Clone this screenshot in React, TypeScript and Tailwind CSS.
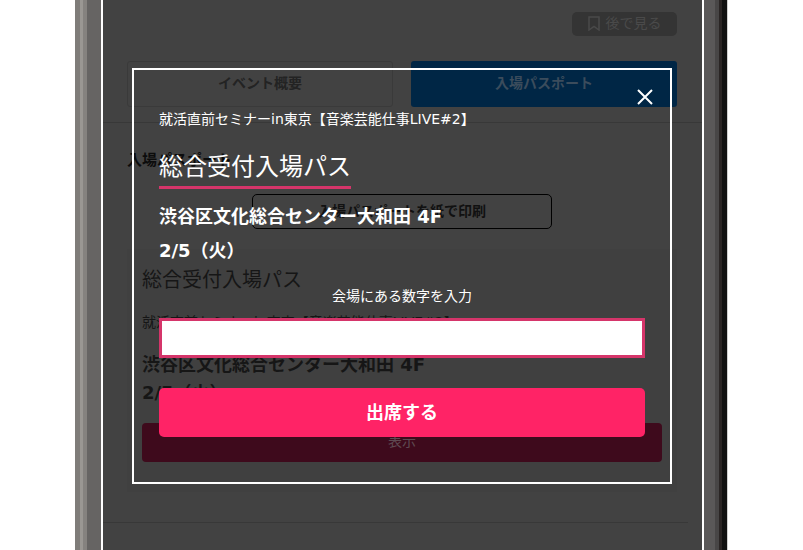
const font = { fontFamily: '"DejaVu Sans", "Noto Sans CJK JP", sans-serif' };

function Underlying() {
  return (
    <div className="flex w-[599px] h-[550px] flex-col bg-[#424242] overflow-hidden">
      <div className="flex justify-end pr-[25px] pt-3">
        <div className="flex h-6 w-[105px] items-center justify-center gap-[6px] rounded-[5px] bg-[#343434] pb-[2px] text-[14px] text-[#4a4a4a]">
          <svg width="12" height="15" viewBox="0 0 12 15" fill="none" stroke="#4a4a4a" strokeWidth="1.5">
            <path d="M1 1h10v13L6 10.5 1 14z" />
          </svg>
          後で見る
        </div>
      </div>
      <div className="mt-[25px] flex gap-[18px] pl-[24px] pr-[25px] border-b border-[#383838] pb-[15px]">
        <div className="flex h-[46px] w-[266px] items-center justify-center rounded-[3px] border border-[#3a3a3a] pb-[2px] text-[14px] font-bold text-[#232323]">イベント概要</div>
        <div className="flex h-[46px] w-[266px] items-center justify-center rounded-[3px] bg-[#002645] pb-[2px] text-[14px] font-bold text-[#3b4c5c]">入場パスポート</div>
      </div>
      <div className="pl-[24px] pr-[25px] pt-[27px]">
        <div className="text-[15px] leading-5 font-bold text-[#0c0c0c]">入場パスポート</div>
        <div className="mt-[24px] mx-auto flex h-[35px] w-[300px] items-center justify-center rounded-[5px] border border-black text-[14px] font-bold text-[#111111]">入場パスポートを紙で印刷</div>
      </div>
      <div className="mt-[20px] ml-[24px] mr-[25px] h-[243px] bg-[#404040] px-[15px] pt-[17px] text-[#161616]">
        <div className="text-[20px] leading-[28px]">総合受付入場パス</div>
        <div className="mt-[18px] text-[14px] leading-5">就活直前セミナーin東京【音楽芸能仕事LIVE#2】</div>
        <div className="mt-[21px] text-[18px] leading-6 font-bold">渋谷区文化総合センター大和田 4F</div>
        <div className="mt-[4px] text-[18px] leading-6 font-bold">2/5（火）</div>
        <div className="mt-[18px] flex h-[39px] w-[520px] items-center justify-center rounded-[4px] bg-[#3e0a1c] pb-[2px] text-[14px] text-[#5f4a52]">表示</div>
      </div>
      <div className="mt-[30px] mr-[14px] h-px bg-[#383838]" />
    </div>
  );
}

function Modal() {
  return (
    <div className="absolute left-[57px] top-[68px] h-[416px] w-[540px] border-2 border-white px-[25px] text-white">
      <button className="absolute right-[16px] top-[18px]" aria-label="close">
        <svg width="18" height="18" viewBox="0 0 18 18" stroke="#fff" strokeWidth="2" fill="none">
          <path d="M2 2l14 14M16 2L2 16" />
        </svg>
      </button>
      <div className="mt-[39px] text-[14px] leading-5">就活直前セミナーin東京【音楽芸能仕事LIVE#2】</div>
      <div className="mt-[21px] w-fit border-b-[3px] border-[#d5356a] pb-[2px] text-[24px] leading-[34px]">総合受付入場パス</div>
      <div className="mt-[16px] text-[18px] leading-6 font-bold">渋谷区文化総合センター大和田 4F</div>
      <div className="mt-[10px] text-[18px] leading-6 font-bold">2/5（火）</div>
      <div className="mt-[23px] text-center text-[14px] leading-5">会場にある数字を入力</div>
      <input className="mt-[12px] block h-10 w-[486px] border-[3px] border-[#d5356a] bg-white" />
      <button className="mt-[30px] block h-[49px] w-[486px] rounded-[5px] bg-[#ff2366] text-[18px] font-bold text-white">出席する</button>
    </div>
  );
}

export default function App() {
  return (
    <div className="h-[550px] w-[803px] overflow-hidden bg-white" style={font}>
      <div className="relative ml-[75px] flex h-[550px] w-[653px]">
        <div className="w-[26px] bg-[linear-gradient(to_right,#7f7c79_0px,#7f7c79_5px,#9a9793_5px,#9a9793_8px,#85827f_8px,#85827f_12px,#666463_12px,#666463_26px)]" />
        <div className="w-[2px] bg-white" />
        <Underlying />
        <div className="w-[2px] bg-white" />
        <div className="w-[23px] bg-[linear-gradient(to_right,#5a5858_0px,#5a5858_11px,#484646_11px,#484646_15px,#2a2524_15px,#2a2524_18px,#111111_18px,#111111_23px)]" />
        <div className="w-px bg-[#cfcfcf]" />
        <Modal />
      </div>
    </div>
  );
}
